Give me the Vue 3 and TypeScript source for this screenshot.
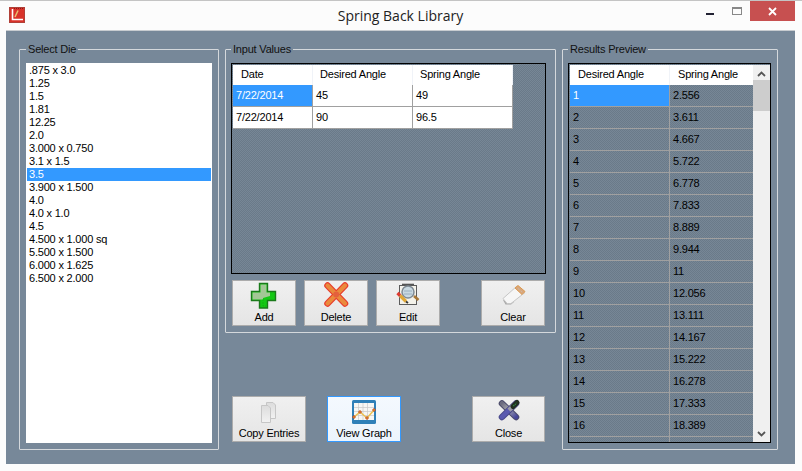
<script setup lang="ts">
const dies: string[] = ['.875 x 3.0','1.25','1.5','1.81','12.25','2.0','3.000 x 0.750','3.1 x 1.5','3.5','3.900 x 1.500','4.0','4.0 x 1.0','4.5','4.500 x 1.000 sq','5.500 x 1.500','6.000 x 1.625','6.500 x 2.000']
const inputs = [
  { date: '7/22/2014', desired: '45', spring: '49' },
  { date: '7/22/2014', desired: '90', spring: '96.5' },
]
const results: [string, string][] = [['1','2.556'],['2','3.611'],['3','4.667'],['4','5.722'],['5','6.778'],['6','7.833'],['7','8.889'],['8','9.944'],['9','11'],['10','12.056'],['11','13.111'],['12','14.167'],['13','15.222'],['14','16.278'],['15','17.333'],['16','18.389'],['','']]
</script>

<template>
  <div class="window">
    <header class="titlebar">
      <svg class="appicon" width="16" height="16" viewBox="0 0 16 16">
        <rect x="0.5" y="0.5" width="15" height="15" fill="#d8322a" stroke="#b04038" />
        <path d="M3.5 2V12.5H14" fill="none" stroke="#fff" stroke-width="1.6" />
        <path d="M6 10L9 3.5" stroke="#e8c070" stroke-width="1.5" />
        <path d="M5 1.5H14.5" stroke="#8a1a14" stroke-width="1" stroke-dasharray="1 1" />
      </svg>
      <div class="title">Spring Back Library</div>
      <div class="controls">
        <span class="minimize"></span>
        <span class="maximize"></span>
        <span class="close-x">
          <svg width="9" height="9" viewBox="0 0 9 9"><path d="M1 1L8 8M8 1L1 8" stroke="#fff" stroke-width="1.8" /></svg>
        </span>
      </div>
    </header>

    <main class="client">
      <fieldset class="group die-group">
        <legend>Select Die</legend>
        <ul class="list">
          <li v-for="(d, i) in dies" :key="d" :class="{ selected: i === 8 }">{{ d }}</li>
        </ul>
      </fieldset>

      <div class="middle">
        <fieldset class="group input-group">
          <legend>Input Values</legend>
          <div class="grid input-grid">
            <div class="row head">
              <div class="cell c1 h1">Date</div>
              <div class="cell c2 h2">Desired Angle</div>
              <div class="cell c3 h2">Spring Angle</div>
            </div>
            <div v-for="(r, i) in inputs" :key="i" class="row">
              <div class="cell c1" :class="{ current: i === 0 }">{{ r.date }}</div>
              <div class="cell c2">{{ r.desired }}</div>
              <div class="cell c3">{{ r.spring }}</div>
            </div>
          </div>
          <div class="btnrow">
            <button class="btn small">
              <svg width="28" height="28" viewBox="0 0 28 28">
                <path d="M9.5 1.5H17.5V9.5H25.5V18.5H17.5V26H9.5V18.5H1.5V9.5H9.5Z" fill="#14c814" stroke="#1a7a1a" stroke-width="1.4" />
                <path d="M10.5 2.5H16.5V10.5H20V14L13 16V17.5H2.5V10.5H10.5Z" fill="#a3c795" />
                <path d="M13 17.5V24H16" fill="none" stroke="#0c9a0c" stroke-width="1" stroke-dasharray="1 2" />
              </svg>
              Add
            </button>
            <button class="btn small">
              <svg width="28" height="28" viewBox="0 0 28 28">
                <path d="M5.5 3.5L23 21.5M23 3.5L5.5 21.5" stroke="#e83c2c" stroke-width="6.5" stroke-linecap="round" />
                <path d="M5.5 3.5L23 21.5M23 3.5L5.5 21.5" stroke="#ea8a3c" stroke-width="4.2" stroke-linecap="round" />
                <circle cx="14.2" cy="12.5" r="3" fill="#e4603c" />
              </svg>
              Delete
            </button>
            <button class="btn small">
              <svg width="28" height="28" viewBox="0 0 28 28">
                <rect x="5.5" y="3.5" width="17" height="19" fill="#f4f2ea" stroke="#5c5c5c" />
                <path d="M8 2.5H20" stroke="#555" stroke-width="1.6" />
                <path d="M20 14L24.5 18" stroke="#a87838" stroke-width="2.6" />
                <circle cx="14" cy="10" r="6" fill="#c9d9e2" stroke="#7f8a94" stroke-width="1.5" />
                <path d="M10 9H18M10 12H18" stroke="#9ab0c0" stroke-width="1" />
                <path d="M6 13.5L12 19.5" stroke="#e0a838" stroke-width="3.2" />
                <path d="M3.5 11L6 13.5" stroke="#dd3a30" stroke-width="3.2" />
                <path d="M12 19.5L14 21" stroke="#333" stroke-width="1.8" />
              </svg>
              Edit
            </button>
            <span class="spring"></span>
            <button class="btn small">
              <svg width="28" height="28" viewBox="0 0 28 28">
                <path d="M4 18L6.5 22.5H12L15 20Z" fill="#a8a8a8" />
                <path d="M4 16.5L18 4L26 10.5L12 21.5H8Z" fill="#f6f6f6" stroke="#c6c6c6" />
                <path d="M16 6L19 3.5L26 9.5L23 12.5Z" fill="#d9a77c" stroke="#dc9a50" />
                <path d="M19 6.5L23 10" stroke="#c8c0b8" stroke-width="1" stroke-dasharray="1 1" />
              </svg>
              Clear
            </button>
          </div>
        </fieldset>
        <div class="btnrow lower">
          <button class="btn wide">
            <svg width="28" height="28" viewBox="0 0 28 28">
              <defs>
                <linearGradient id="page" x1="0" y1="0" x2="0" y2="1">
                  <stop offset="0" stop-color="#dcdcdc" />
                  <stop offset="1" stop-color="#f2f2f2" />
                </linearGradient>
              </defs>
              <path d="M11.5 4.5H18L20.5 7V20.5H11.5Z" fill="url(#page)" stroke="#c6c6c6" />
              <path d="M6.5 7.5H13L15.5 10V24.5H6.5Z" fill="url(#page)" stroke="#c6c6c6" />
            </svg>
            Copy Entries
          </button>
          <button class="btn wide focus">
            <svg width="28" height="28" viewBox="0 0 28 28">
              <rect x="2" y="2" width="24" height="24" rx="1.5" fill="#2f80b8" />
              <rect x="4" y="5" width="20" height="17" fill="#f7f7f4" />
              <path d="M4 9.5H24M4 13.5H24M4 17.5H24M8.5 5V22M13 5V22M17.5 5V22" stroke="#c8c8c8" stroke-width=".7" />
              <path d="M4 19L10 14L17 20L24 12" fill="none" stroke="#ecc050" stroke-width="1.4" />
              <g fill="#f0a030" stroke="#b03a20" stroke-width=".7">
                <circle cx="4" cy="19" r="1.3" /><circle cx="10" cy="14" r="1.3" /><circle cx="17" cy="20" r="1.3" /><circle cx="24" cy="12" r="1.3" />
              </g>
            </svg>
            View Graph
          </button>
          <span class="spring"></span>
          <button class="btn narrow">
            <svg width="28" height="28" viewBox="0 0 28 28">
              <defs>
                <linearGradient id="armA" x1="0" y1="0" x2="1" y2="1">
                  <stop offset="0" stop-color="#6c6c80" />
                  <stop offset="0.45" stop-color="#aaaab0" />
                  <stop offset="1" stop-color="#47479a" />
                </linearGradient>
              </defs>
              <path d="M7 5.5L21 19" stroke="#4a4a6a" stroke-width="6.5" stroke-linecap="round" />
              <path d="M7 5.5L21 19" stroke="url(#armA)" stroke-width="4.5" stroke-linecap="round" />
              <path d="M21 5.5L7 19" stroke="#4a4a8a" stroke-width="6.5" stroke-linecap="round" />
              <path d="M14 12.2L7 19" stroke="#5a5ab0" stroke-width="4.5" stroke-linecap="round" />
              <path d="M14 12.2L19 7.5" stroke="#9c9ca6" stroke-width="4.5" />
              <path d="M18 8.5L22 4.5" stroke="#222e22" stroke-width="5" stroke-linecap="round" />
              <path d="M18.5 8L21.5 5" stroke="#2fa04a" stroke-width="1.2" stroke-dasharray="1 1" />
            </svg>
            Close
          </button>
        </div>
      </div>

      <fieldset class="group results-group">
        <legend>Results Preview</legend>
        <div class="grid results-grid">
          <div class="results-body">
            <div class="row head">
              <div class="cell rc1 h2">Desired Angle</div>
              <div class="cell rc2 h2">Spring Angle</div>
            </div>
            <div v-for="(r, i) in results" :key="i" class="row dark">
              <div class="cell rc1" :class="{ current: i === 0 }">{{ r[0] }}</div>
              <div class="cell rc2">{{ r[1] }}</div>
            </div>
          </div>
          <div class="scrollbar">
            <svg class="arrow" width="9" height="6" viewBox="0 0 9 6"><path d="M1 5L4.5 1.5L8 5" fill="none" stroke="#555" stroke-width="1.8" /></svg>
            <div class="thumb"></div>
            <span class="spring"></span>
            <svg class="arrow" width="9" height="6" viewBox="0 0 9 6"><path d="M1 1L4.5 4.5L8 1" fill="none" stroke="#555" stroke-width="1.8" /></svg>
          </div>
        </div>
      </fieldset>
    </main>
  </div>
</template>

<style>
html, body { margin: 0; padding: 0; background: #fbfbfb; }
</style>

<style scoped>
.window {
  width: 802px;
  height: 471px;
  box-sizing: border-box;
  background: #fcfcfc;
  border-top: 1px solid #c4c4c4;
  font-family: "Liberation Sans", Arial, sans-serif;
  font-size: 11px;
  letter-spacing: -0.2px;
  color: #000;
  overflow: hidden;
}
.titlebar {
  height: 29px;
  display: flex;
  align-items: center;
  padding: 0 0 0 9px;
}
.appicon { align-self: flex-start; margin-top: 6px; flex: none; }
.title {
  flex: 1;
  text-align: center;
  font-family: "Open Sans", "Noto Sans", sans-serif;
  font-size: 14px;
  letter-spacing: 0;
  margin-left: 70px;
  margin-top: -1px;
  color: #222;
}
.controls {
  display: flex;
  align-items: flex-start;
  align-self: flex-start;
  margin-right: 7px;
}
.minimize { width: 8px; height: 2px; background: #223; margin: 12px 18px 0 0; }
.maximize { width: 8px; height: 5px; border: 1px solid #888; border-top-width: 2px; margin: 6px 8px 0 0; }
.close-x {
  width: 45px;
  height: 20px;
  background: #c75050;
  display: flex;
  align-items: center;
  justify-content: center;
}
.client {
  margin: 0 6px 0 6px;
  width: 789px;
  height: 434px;
  box-sizing: border-box;
  background: #778899;
  border-top: 1px solid #c8ccd0;
  display: flex;
  align-items: flex-start;
  padding: 12px 0 0 13px;
}
.group {
  margin: 0;
  padding: 0;
  border: 1px solid #d4d8dc;
  border-radius: 1px;
  box-sizing: border-box;
  min-width: 0;
}
.group legend {
  padding: 0 2px;
  margin-left: 0;
  font-size: 11px;
  line-height: 13px;
  color: #111;
}
.die-group { width: 200px; height: 407px; padding: 7px 6px 0 6px; }
.middle { width: 331px; margin-left: 6px; display: flex; flex-direction: column; }
.input-group { width: 331px; height: 290px; padding: 7px 9px 0 5px; }
.results-group { width: 216px; height: 407px; margin-left: 6px; padding: 7px 6px 0 5px; }
.list {
  list-style: none;
  margin: 0;
  padding: 1px;
  height: 380px;
  box-sizing: border-box;
  background: #fff;
  overflow: hidden;
}
.list li { height: 13px; line-height: 13px; padding-left: 2px; }
.list li.selected { background: #3399ff; color: #fff; }
.grid {
  box-sizing: border-box;
  border: 1px solid #000;
  background-color: #6d7f90;
  background-image: repeating-conic-gradient(#6a7a89 0 25%, #778796 0 50%);
  background-size: 2px 2px;
  overflow: hidden;
}
.input-grid { width: 315px; height: 211px; padding: 1px; margin-bottom: 6px; }
.results-grid { width: 203px; height: 380px; padding: 1px 0 0 1px; display: flex; }
.results-body { width: 183px; height: 378px; overflow: hidden; flex: none; }
.row { display: flex; height: 22px; }
.row.head { height: 20px; width: max-content; background: #fff; }
.cell {
  box-sizing: border-box;
  height: 100%;
  background: #fff;
  border-right: 1px solid #a0a0a0;
  border-bottom: 1px solid #a0a0a0;
  padding-left: 3px;
  line-height: 21px;
  white-space: nowrap;
  overflow: hidden;
}
.row.head .cell { border-right: 1px solid #f0f3f8; border-bottom: 0; line-height: 19px; }
.row.head .h1 { padding-left: 8px; }
.row.head .h2 { padding-left: 7px; }
.results-body .row.head .h2 { padding-left: 8px; }
.c1 { width: 80px; }
.c2 { width: 100px; }
.c3 { width: 100px; }
.rc1 { width: 100px; }
.rc2 { width: 83px; border-right: 0 !important; }
.row.dark .cell { background: transparent; }
.cell.current { background: #3399ff !important; color: #fff; }
.scrollbar {
  width: 17px;
  height: 378px;
  flex: none;
  background: #f0f0f0;
  display: flex;
  flex-direction: column;
  align-items: center;
  padding-bottom: 6px;
  box-sizing: border-box;
}
.arrow { margin-top: 6px; flex: none; }
.thumb { width: 100%; height: 31px; background: #cdcdcd; margin-top: 3px; flex: none; }
.spring { flex: 1; }
.btnrow { display: flex; gap: 8px; width: 313px; }
.input-group .btnrow { margin-left: 1px; }
.btn {
  box-sizing: border-box;
  border: 1px solid #acacac;
  background: linear-gradient(#f0f0f0, #e5e5e5);
  font-family: inherit;
  font-size: 11px;
  letter-spacing: inherit;
  color: #000;
  padding: 0;
  display: flex;
  flex-direction: column;
  align-items: center;
  justify-content: flex-start;
}
.btn svg { display: block; margin-top: 1px; margin-bottom: 1px; flex: none; }
.small { width: 64px; height: 46px; }
.wide { width: 74px; height: 46px; }
.narrow { width: 73px; height: 46px; }
.focus { border-color: #3399ff; background: linear-gradient(#f4f9fe, #ecf4fc); }
.lower { margin-top: 63px; margin-left: 7px; gap: 21px; }
</style>
